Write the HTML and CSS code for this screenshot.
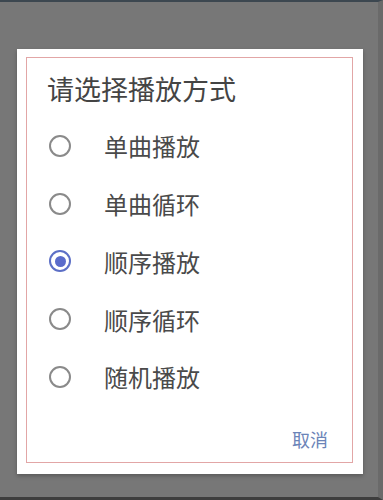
FILE: index.html
```html
<!DOCTYPE html>
<html lang="zh-CN">
<head>
    <meta charset="UTF-8">
    <meta name="viewport" content="width=device-width, initial-scale=1.0">
    <title>播放方式</title>
    <link rel="stylesheet" href="styles.css">
</head>
<body>
    <div class="screen">
        <div class="dialog">
            <div class="frame">
                <div class="title">请选择播放方式</div>
                <div class="options">
                    <label class="option"><span class="radio"></span><span class="label">单曲播放</span></label>
                    <label class="option"><span class="radio"></span><span class="label">单曲循环</span></label>
                    <label class="option"><span class="radio checked"></span><span class="label">顺序播放</span></label>
                    <label class="option"><span class="radio"></span><span class="label">顺序循环</span></label>
                    <label class="option"><span class="radio"></span><span class="label">随机播放</span></label>
                </div>
                <div class="actions">
                    <span class="cancel">取消</span>
                </div>
            </div>
        </div>
    </div>
</body>
</html>
```

FILE: styles.css
```css
body {
    margin: 0;
    height: 500px;
    overflow: hidden;
    background: #777;
    font-family: "Noto Sans CJK SC", "Noto Sans", sans-serif;
}

.screen {
    height: 500px;
    box-sizing: border-box;
    border-top: 2px solid #3c4750;
    border-bottom: 3px solid #3e3e3e;
    border-right: 5px solid #6a6a6a;
    padding: 47px 0 0 17px;
}

.dialog {
    width: 346px;
    height: 425px;
    box-sizing: border-box;
    background: #fff;
    padding: 8px 10px 11px 9px;
    box-shadow: 0 2px 4px rgba(0, 0, 0, 0.25);
}

.frame {
    height: 100%;
    box-sizing: border-box;
    border: 1px solid #e2a6a6;
    display: flex;
    flex-direction: column;
    padding-top: 14px;
}

.title {
    font-size: 27px;
    line-height: 34px;
    color: #444;
    padding-left: 20px;
}

.options {
    margin-top: 11px;
    display: flex;
    flex-direction: column;
}

.option {
    height: 57.75px;
    display: flex;
    align-items: center;
    padding-left: 22px;
}

.radio {
    width: 22px;
    height: 22px;
    box-sizing: border-box;
    border: 2px solid #8a8a8a;
    border-radius: 50%;
    display: flex;
    justify-content: center;
    align-items: center;
}

.radio.checked {
    border-color: #5c6fc6;
}

.radio.checked::after {
    content: "";
    width: 11px;
    height: 11px;
    border-radius: 50%;
    background: #5a6bcb;
}

.label {
    margin-left: 33px;
    font-size: 24px;
    color: #4a4a4a;
}

.actions {
    margin-top: auto;
    display: flex;
    justify-content: flex-end;
    padding: 0 24px 11px 0;
}

.cancel {
    font-size: 18px;
    line-height: 24px;
    color: #6b84b8;
}
```
